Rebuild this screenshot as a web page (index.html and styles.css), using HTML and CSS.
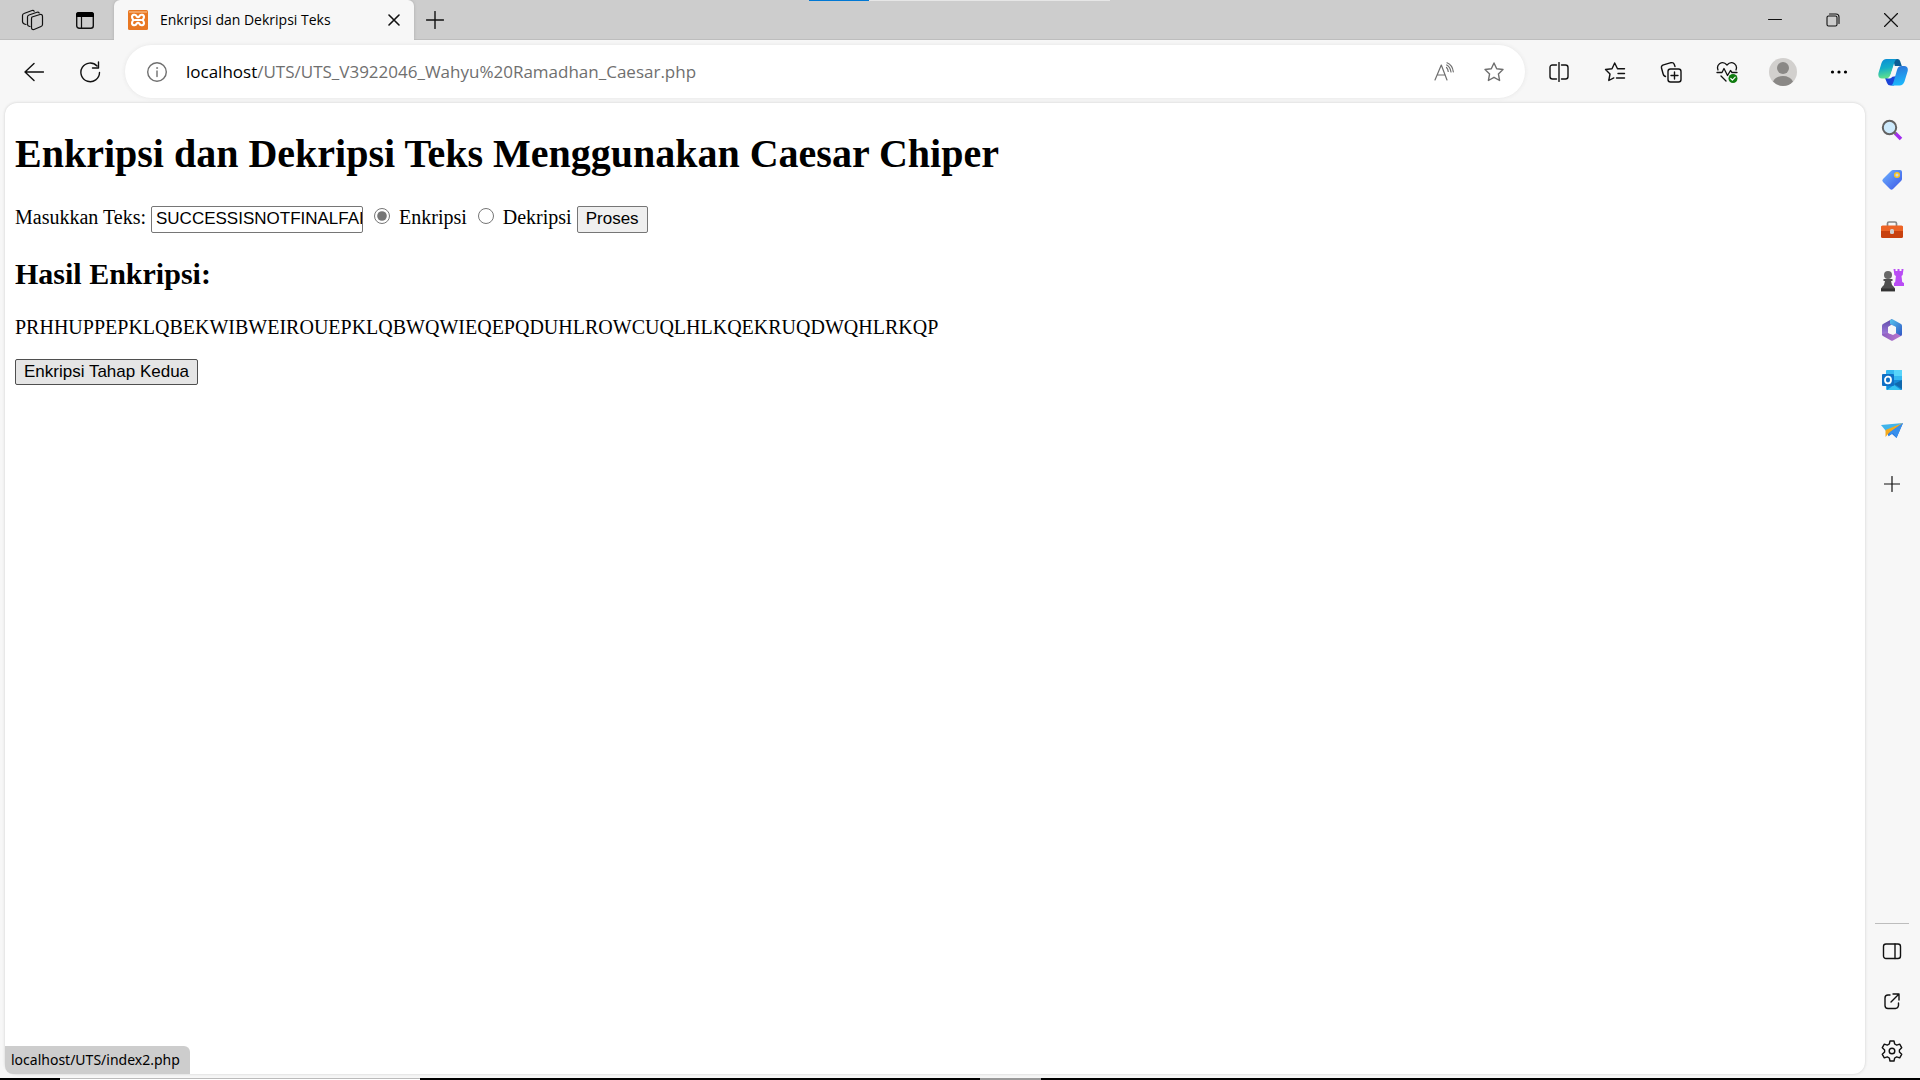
FILE: index.html
```html
<!DOCTYPE html>
<html lang="id">
<head>
<meta charset="utf-8">
<title>Enkripsi dan Dekripsi Teks</title>
<link rel="stylesheet" href="styles.css">
</head>
<body>
<div class="browser">
  <header class="titlebar">
    <button class="title-btn" aria-label="Workspaces"><svg width="24" height="24" viewBox="0 0 24 24" class="line thin"><path d="M11 9l8-2.500q2.500-.5 2.500 2v8q0 1.500-1.500 2L13 21.500Q10.500 22 10.500 19.500V11q0-1.500.5-2z"/><path d="M9 18.500l-1-.3Q6.500 18 6.500 16V9q0-1.500 1.500-2l8-2.700q1.500-.5 2.200.7"/><path d="M5 16.500l-1-.3Q1.500 15.500 1.500 13.500V7.500q0-1.500 1.500-2l8-3q1.500-.5 2.200.7"/></svg></button>
    <button class="title-btn" aria-label="Tab actions"><svg width="20" height="20" viewBox="0 0 20 20"><rect x="1.700" y="2.700" width="16.600" height="15.600" rx="2.500" fill="none" stroke="#111" stroke-width="1.400"/><path d="M1 7V4.500Q1 2 3.500 2h13Q19 2 19 4.500V7z" fill="#000"/><path d="M6.500 7v11" stroke="#111" stroke-width="1.200"/></svg></button>
    <div class="tab">
      <svg width="20" height="20" viewBox="0 0 20 20"><rect width="20" height="20" rx="1.500" fill="#e87722"/><path d="M1 1h18v2H1z" fill="#f3a261"/><path d="M8.800 6.500C7.500 3.700 4 4.500 4 7c0 1.400.7 2.200 1.600 3C4.700 10.800 4 11.600 4 13c0 2.500 3.500 3.300 4.800.5M11.200 6.500C12.500 3.700 16 4.500 16 7c0 1.400-.7 2.200-1.600 3 .9.800 1.600 1.600 1.600 3 0 2.500-3.500 3.300-4.800.5M7 10h6M8.800 6.500Q10 8 11.200 6.500M8.800 13.500Q10 12 11.200 13.500" fill="none" stroke="#fff" stroke-width="2.100" stroke-linecap="round"/></svg>
      <span class="tab-title">Enkripsi dan Dekripsi Teks</span>
      <button class="tab-close" aria-label="Close tab"><svg width="12" height="12" viewBox="0 0 12 12" class="line"><path d="M1 1l10 10M11 1L1 11" stroke-width="1.600"/></svg></button>
    </div>
    <button class="new-tab" aria-label="New tab"><svg width="18" height="18" viewBox="0 0 18 18" class="line"><path d="M9 .5v17M.5 9h17"/></svg></button>
    <div class="window-controls">
      <button class="window-btn" aria-label="Minimize"><svg width="14" height="14" viewBox="0 0 14 14" class="line"><path d="M.5 6.500h13" stroke-width="1"/></svg></button>
      <button class="window-btn" aria-label="Restore"><svg width="14" height="14" viewBox="0 0 14 14" class="line"><rect x="1" y="3" width="10" height="10" rx="1.500" stroke-width="1.100"/><path d="M3.500 1H10q3 0 3 3v6.500" stroke-width="1.100"/></svg></button>
      <button class="window-btn" aria-label="Close"><svg width="14" height="14" viewBox="0 0 14 14" class="line"><path d="M.5 .5l13 13M13.500 .5l-13 13" stroke-width="1.200"/></svg></button>
    </div>
    <div class="share-strip"><span></span></div>
  </header>

  <nav class="toolbar">
    <button class="tool" aria-label="Back"><svg width="20" height="20" viewBox="0 0 20 20" class="line"><path d="M19.500 10H1M10 1.500L1 10l9 8.500"/></svg></button>
    <button class="tool" aria-label="Refresh"><svg width="22" height="22" viewBox="0 0 22 22" class="line"><path d="M18 5a9.300 9.300 0 1 0 2.500 6.500M19.500 1v6h-6"/></svg></button>
    <div class="address">
      <svg width="20" height="20" viewBox="0 0 20 20" class="line soft"><circle cx="10" cy="10" r="9.300"/><path d="M10 9v5.500"/><circle cx="10" cy="6" r=".6" fill="#6f6f6f" stroke-width=".6"/></svg>
      <div class="url" role="textbox" aria-label="Address" contenteditable="true" spellcheck="false"><span class="host">localhost</span>/UTS/UTS_V3922046_Wahyu%20Ramadhan_Caesar.php</div>
      <button class="address-btn" aria-label="Read aloud"><svg width="20" height="20" viewBox="0 0 20 20" class="line soft"><path d="M1 18L7.300 3 13 18M3.300 13h8M12.500 5.500q1.500 1.500 1.700 4M12.700 3q3.600 2 4.300 7M13 .8q5.500 2.200 6.300 9" stroke-width="1.200"/></svg></button>
      <button class="address-btn" aria-label="Add to favorites"><svg width="20" height="20" viewBox="0 0 20 20" class="line soft"><path d="M10 1l2.700 5.700 6.300.8-4.600 4.400 1.200 6.600L10 15.300 4.400 18.500l1.200-6.600L1 7.500l6.300-.8z"/></svg></button>
    </div>
    <button class="tool" aria-label="Split screen"><svg width="20" height="20" viewBox="0 0 20 20" class="line"><path d="M7.500 3h-4Q1 3 1 5.500v9Q1 17 3.500 17h4M12.500 3h4Q19 3 19 5.500v9q0 2.500-2.500 2.500h-4M10 .5v19"/></svg></button>
    <button class="tool" aria-label="Favorites"><svg width="22" height="20" viewBox="0 0 22 20" class="line"><path d="M13.500 6.700L10.700 1 8 6.700l-6.500.8L6 12l-1.200 6.500 5-2.600M13.500 6.700h7M14 11.500h6.500M12.500 16h8"/></svg></button>
    <button class="tool" aria-label="Collections"><svg width="22" height="22" viewBox="0 0 22 22" class="line"><rect x="8" y="8" width="13" height="13" rx="2.500"/><path d="M14.500 11v7M11 14.500h7M5.500 15.500L4.500 15Q3.500 14.500 3 12.500L1.500 7q-.5-2.500 2-3.200L11 1.700q2.500-.5 3.200 1.500l.8 2.300"/></svg></button>
    <button class="tool" aria-label="Browser essentials"><svg width="22" height="22" viewBox="0 0 22 22" class="line"><path d="M2 9Q.5 5 3.500 2.700 7.500 0 11 4q3.500-4 7.500-1.300Q21.500 5 20 9M1 11.500h5l2-4 3.500 7 3-5 1.500 2h5M5 15l5 5" stroke-width="1.300"/><circle cx="17" cy="17.500" r="4.500" fill="#107c10" stroke="none"/><path d="M14.800 17.500l1.600 1.600 2.800-3" stroke="#fff" stroke-width="1.200"/></svg></button>
    <button class="tool" aria-label="Profile"><svg width="28" height="28" viewBox="0 0 28 28"><circle cx="14" cy="14" r="14" fill="#d2d0ce"/><circle cx="14" cy="10" r="6" fill="#8a8886"/><path d="M4 23.500Q7 18 14 18t10 5.500Q20 28 14 28T4 23.500z" fill="#8a8886"/></svg></button>
    <button class="tool" aria-label="Settings and more"><svg width="18" height="18" viewBox="0 0 18 18"><circle cx="2.500" cy="9" r="1.600"/><circle cx="9" cy="9" r="1.600"/><circle cx="15.500" cy="9" r="1.600"/></svg></button>
    <button class="tool copilot" aria-label="Copilot"><svg width="30" height="28" viewBox="0 0 30 28"><defs><linearGradient id="cpA" x2=".2" y2="1"><stop stop-color="#0a8bd6"/><stop offset=".5" stop-color="#12adc9"/><stop offset="1" stop-color="#5fe08c"/></linearGradient><linearGradient id="cpB" x2=".2" y2="1"><stop stop-color="#2e6fd6"/><stop offset="1" stop-color="#1cb5fb"/></linearGradient></defs><path d="M15 1h4.500q2 0 2.600 2l1.700 5h-7z" fill="#0a5d94"/><path d="M7 20l2 5q1 2.500 3.500 2.500H16L19 18z" fill="#1b44d8"/><path d="M8.500 1H20q-2.500 0-3.500 3l-4 13q-1 3.500-4.500 3.500H4Q-.5 20.500.500 15L3.500 5Q5 1 8.500 1z" fill="url(#cpA)"/><path d="M21.500 27.500H12q2.500 0 3.500-3.500L19 12q1-4 4.500-4H26q4.500 0 3.700 5L26.500 23.500q-1.500 4-5 4z" fill="url(#cpB)"/><path d="M15.500 8.500h4q-2 1-3 5l-1.500 4q-1 2.500-3.500 3H9q3-1 4-5z" fill="#f7f7f7"/></svg></button>
  </nav>

  <div class="workspace">
    <main class="page">
      <h1>Enkripsi dan Dekripsi Teks Menggunakan Caesar Chiper</h1>
      <form>
        <label for="teks">Masukkan Teks:</label>
        <input class="text" type="text" id="teks" value="SUCCESSISNOTFINALFAILUREISNOTFATAL">
        <input class="choice" type="radio" name="mode" id="enkripsi" checked>
        <label for="enkripsi">Enkripsi</label>
        <input class="choice" type="radio" name="mode" id="dekripsi">
        <label for="dekripsi">Dekripsi</label>
        <button class="action" type="button">Proses</button>
      </form>
      <h2>Hasil Enkripsi:</h2>
      <p>PRHHUPPEPKLQBEKWIBWEIROUEPKLQBWQWIEQEPQDUHLROWCUQLHLKQEKRUQDWQHLRKQP</p>
      <button class="action hovered" type="button">Enkripsi Tahap Kedua</button>
      <div class="status">localhost/UTS/index2.php</div>
    </main>

    <aside class="sidebar">
      <button class="side-btn" aria-label="Search"><svg width="22" height="22" viewBox="0 0 22 22"><path d="M14 14l6 6" stroke="#a32cf0" stroke-width="3.600"/><path d="M12.500 12.500l2.500 2.500" stroke="#777" stroke-width="2"/><circle cx="8.500" cy="8.500" r="6.700" fill="#cdeafc" stroke="#626262" stroke-width="2"/></svg></button>
      <button class="side-btn" aria-label="Shopping"><svg width="22" height="22" viewBox="0 0 22 22"><defs><linearGradient id="tag" x2="1" y2="1"><stop stop-color="#6db4ff"/><stop offset="1" stop-color="#3c55e6"/></linearGradient></defs><path d="M12 1h7q2 0 2 2v7q0 1-1 2l-8 8q-1.500 1.500-3 0l-7-7q-1.500-1.500 0-3l8-8q1-1 2-1z" fill="url(#tag)"/><circle cx="16" cy="6" r="2.300" fill="#c7d4ee" stroke="#f9c51d" stroke-width="1.500"/></svg></button>
      <button class="side-btn" aria-label="Tools"><svg width="22" height="22" viewBox="0 0 22 22"><path d="M6.500 7V4.500Q6.500 3 8 3h6q1.500 0 1.500 1.500V7" fill="none" stroke="#858585" stroke-width="1.700"/><rect y="7" width="22" height="12" rx="1.500" fill="#c8410f"/><path d="M0 12V8q0-1.500 1.500-1.500h19Q22 6.500 22 8v4z" fill="#ed6325"/><rect x="9" y="10" width="4" height="5" rx="1.500" fill="#d0d0d0"/></svg></button>
      <button class="side-btn" aria-label="Games"><svg width="24" height="24" viewBox="0 0 24 24"><path d="M13.500 1h2v2h2V1h2v2h2V1h2l-.8 6-1.200 1 .7 6 1.800 1v3h-10v-3l1.200-1 .7-6-1.500-1z" fill="#b94cf5"/><circle cx="8" cy="7" r="4" fill="#686868"/><path d="M3.500 11h9v2H11q.3 4 3 6 1.500 1 1 4.500H1Q.5 20 2 19q2.700-2 3-6H3.500z" fill="#505050"/><path d="M1 20.500h14V23H1z" fill="#333"/></svg></button>
      <button class="side-btn" aria-label="Microsoft 365"><svg width="22" height="22" viewBox="0 0 22 22"><defs><linearGradient id="mA" x2="0" y2="1"><stop stop-color="#5b4aa8"/><stop offset="1" stop-color="#a77fe0"/></linearGradient><linearGradient id="mB" x2="1" y2="0"><stop stop-color="#8a5fc0"/><stop offset="1" stop-color="#c077cf"/></linearGradient><linearGradient id="mC" x2="1" y2="1"><stop stop-color="#55c4ee"/><stop offset="1" stop-color="#2f56c4"/></linearGradient></defs><path d="M11 0L2 5Q1 5.500 1 7v8q0 1.500 2 2l4-2V8l6-4z" fill="url(#mA)"/><path d="M1 15q0 1.500 1 2l8 4.600q1 .5 2 0l8-4.600q1-.5 1-2v-4l-9 5-5-2z" fill="url(#mB)"/><path d="M9 1.300L10 .5q1-.5 2 0l8 4.500q1 .5 1 2v8q0 1-1 2l-5-3V8L9 5z" fill="url(#mC)"/><circle cx="11" cy="11" r="4" fill="#f7f7f7"/></svg></button>
      <button class="side-btn" aria-label="Outlook"><svg width="22" height="22" viewBox="0 0 22 22"><rect x="5" y="1" width="16" height="20" rx="1" fill="#35b8f1"/><path d="M13 1h7q1 0 1 1v5h-8z" fill="#57d4fa"/><path d="M6 11h15v9q0 1-1 1H6z" fill="#168bd8"/><path d="M21 11v9l-8-5z" fill="#1068ad"/><path d="M6 21h14l-7-5z" fill="#34c2f1"/><rect x="1" y="5" width="12" height="12" rx="1" fill="#0f6fc5"/><ellipse cx="7" cy="11" rx="3" ry="3.300" fill="none" stroke="#fff" stroke-width="1.800"/></svg></button>
      <button class="side-btn" aria-label="Drop"><svg width="22" height="22" viewBox="0 0 22 22"><path d="M0 6l22-2L5 12z" fill="#41b5eb"/><path d="M22 4l-6.500 15-4.500-4-4 2v-5z" fill="#2875e0"/><path d="M22 4L4.500 11v7L8 14z" fill="#f3a91e"/><path d="M22 4L9 13l-1.500 4.500L12 14l3.500 5z" fill="#378fec"/></svg></button>
      <button class="side-btn add" aria-label="Customize"><svg width="16" height="16" viewBox="0 0 16 16" class="line"><path d="M8 .5v15M.5 8h15" stroke-width="1.200"/></svg></button>
      <div class="side-end">
        <button class="side-btn" aria-label="Hide sidebar"><svg width="20" height="20" viewBox="0 0 20 20" class="line"><rect x="1.500" y="3" width="17" height="14.500" rx="2.500"/><path d="M13 3v14.500"/></svg></button>
        <button class="side-btn" aria-label="Open link externally"><svg width="20" height="20" viewBox="0 0 20 20" class="line"><path d="M8 4H6Q3 4 3 7v7.500q0 3 3 3h7.500q2.500 0 3-3V12M11 3h6v6M17 3l-8 8"/></svg></button>
        <button class="side-btn" aria-label="Settings"><svg width="22" height="22" viewBox="0 0 22 22" class="line"><path d="M9 1h4l.7 3 2 1.100 3-.9 2 3.500-2.300 2.200v2.200l2.300 2.200-2 3.500-3-.9-2 1.100L13 21H9l-.7-3-2-1.100-3 .9-2-3.500 2.300-2.200V9.900L1.300 7.700l2-3.500 3 .9 2-1.100z"/><circle cx="11" cy="11" r="2.800"/></svg></button>
      </div>
    </aside>
  </div>

  <footer class="desktop-edge"><span class="dark first"></span><span class="light"></span><span class="dark second"></span><span class="grey"></span><span class="dark rest"></span></footer>
</div>
</body>
</html>
```

FILE: styles.css
```css
* { box-sizing: border-box; }

body {
  margin: 0;
  background: #f7f7f7;
  color: #000;
  font: 20px/normal "Liberation Serif", serif;
}

button {
  padding: 0;
  border: 0;
  background: none;
  color: inherit;
}

svg { display: block; flex: none; }

.line {
  fill: none;
  stroke: #111;
  stroke-width: 1.4;
  stroke-linecap: round;
  stroke-linejoin: round;
}

.thin { stroke-width: 1.2; }
.soft { stroke: #6f6f6f; }

.browser {
  display: flex;
  flex-direction: column;
  min-height: 100vh;
}

/* Title bar */
.titlebar {
  position: relative;
  display: flex;
  height: 40px;
  padding-left: 7px;
  background: #cdcdcd;
  box-shadow: inset 0 -1px #bdbdbd;
}

.title-btn, .new-tab, .window-btn, .tool, .side-btn, .address-btn, .tab-close {
  display: flex;
  align-items: center;
  justify-content: center;
}

.title-btn { width: 52px; }

.tab {
  display: flex;
  align-items: center;
  width: 300px;
  margin-left: 3px;
  padding: 0 12px 0 14px;
  border-radius: 6px 6px 0 0;
  background: #f7f7f7;
  box-shadow: 0 0 3px #aaa;
  clip-path: inset(0 -3px);
  font: 14px/20px "Open Sans", sans-serif;
}

.tab-title { flex: 1; margin-left: 12px; white-space: nowrap; }
.tab-close { width: 16px; height: 16px; }
.new-tab { width: 42px; }

.window-controls { display: flex; margin-left: auto; }
.window-btn { width: 58px; }

.share-strip {
  position: absolute;
  top: 0;
  left: 809px;
  width: 301px;
  height: 1px;
  background: #e6e6e6;
}

.share-strip span {
  display: block;
  width: 20%;
  height: 1px;
  background: #0078d4;
}

/* Toolbar */
.toolbar {
  display: flex;
  align-items: center;
  height: 63px;
  padding: 0 2px 0 6px;
}

.tool { width: 56px; height: 52px; }
.copilot { width: 51px; }

.address {
  display: flex;
  flex: 1;
  align-items: center;
  height: 53px;
  margin: 0 6px 0 7px;
  padding: 0 6px 0 22px;
  border-radius: 27px;
  background: #fff;
  box-shadow: 0 0 4px #e4e4e4;
}

.url {
  flex: 1;
  margin-left: 19px;
  color: #6f6f6f;
  font: 17px/24px "Open Sans", sans-serif;
}

.host { color: #000; }
.address-btn { width: 50px; height: 40px; }

/* Web page and sidebar */
.workspace { display: flex; flex: 1; }

.page {
  position: relative;
  flex: 1;
  margin: 0 0 4px 5px;
  padding: 0 10px;
  border-radius: 12px;
  background: #fff;
  box-shadow: 0 0 3px #ccc;
}

h1 { margin: 28px 0 27px; font-size: 40px; line-height: 46px; }
h2 { margin: 24px 0 25px; font-size: 30px; line-height: 34px; }
p { margin: 20px 0; line-height: 23px; }

.text, .action {
  height: 27px;
  border: 1px solid #767676;
  border-radius: 2px;
  font: 17px/20px "Liberation Sans", sans-serif;
}

.text { width: 212px; padding: 1px 0 1px 4px; background: #fff; }
.action { padding: 0 8px; background: #efefef; }
.hovered { display: block; height: 26px; border-color: #4f4f4f; background: #e5e5e5; }

.choice { width: 16px; height: 16px; margin: 4px 4px 0 6px; accent-color: #767676; }

.status {
  position: absolute;
  bottom: 0;
  left: 0;
  padding: 4px 10px 4px 6px;
  border-radius: 0 6px 0 8px;
  background: #cdcdcd;
  font: 14px/20px "Noto Sans", sans-serif;
}

.sidebar {
  display: flex;
  flex-direction: column;
  align-items: center;
  width: 55px;
  padding: 2px 1px 2px 0;
}

.side-btn { width: 50px; height: 50px; }
.add { margin-top: 4px; }

.side-end { margin-top: auto; }

.side-end::before {
  display: block;
  height: 1px;
  margin: 0 8px 2px;
  background: #bdbdbd;
  content: "";
}

/* Edge of the desktop below the window */
.desktop-edge { display: flex; height: 2px; }
.dark { background: #000; }
.light { width: 360px; border-top: 1px solid #bbb; background: #fff; }
.grey { width: 61px; background: #999; }
.first { width: 60px; }
.second { width: 560px; }
.rest { flex: 1; }
```
